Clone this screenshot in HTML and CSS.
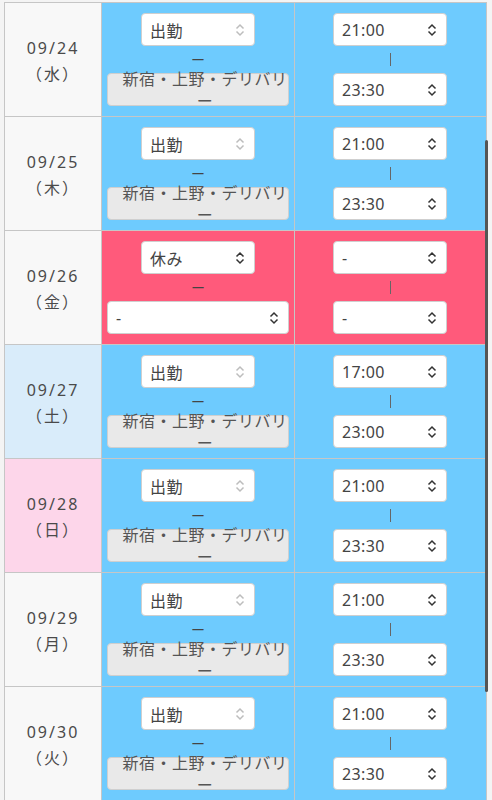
FILE: index.html
```html
<!DOCTYPE html>
<html lang="ja">
<head>
  <meta charset="UTF-8" />
  <meta name="viewport" content="width=device-width, initial-scale=1.0"/>
  <title>シフト提出</title>
  <link rel="stylesheet" href="styles.css">
</head>
<body>
  <div class="shift-table" id="shiftTable"></div>
  <div class="scroll-thumb"></div>

  <script>
    const shifts = [
      { date: "09/24", day: "水", status: "出勤", place: "新宿・上野・デリバリー", start: "21:00", end: "23:30" },
      { date: "09/25", day: "木", status: "出勤", place: "新宿・上野・デリバリー", start: "21:00", end: "23:30" },
      { date: "09/26", day: "金", status: "休み", place: "-", start: "-", end: "-" },
      { date: "09/27", day: "土", status: "出勤", place: "新宿・上野・デリバリー", start: "17:00", end: "23:00" },
      { date: "09/28", day: "日", status: "出勤", place: "新宿・上野・デリバリー", start: "21:00", end: "23:30" },
      { date: "09/29", day: "月", status: "出勤", place: "新宿・上野・デリバリー", start: "21:00", end: "23:30" },
      { date: "09/30", day: "火", status: "出勤", place: "新宿・上野・デリバリー", start: "21:00", end: "23:30" },
    ];

    const chev = '<svg class="chev" viewBox="0 0 10 14" width="10" height="14"><path d="M1.5 5.5 5 2 8.5 5.5M1.5 8.5 5 12 8.5 8.5" fill="none" stroke="currentColor" stroke-width="1.5"/></svg>';

    const table = document.getElementById('shiftTable');
    shifts.forEach(s => {
      const off = s.status === "休み";
      const dayClass = s.day === "土" ? " sat" : s.day === "日" ? " sun" : "";
      const rowClass = off ? " off" : "";
      table.insertAdjacentHTML('beforeend', `
        <div class="cell date${dayClass}">
          <span>${s.date}</span>
          <span>（${s.day}）</span>
        </div>
        <div class="cell work${rowClass}">
          <div class="sel status${off ? '' : ' locked'}"><span>${s.status}</span>${chev}</div>
          <div class="dash"><span>ー</span></div>
          ${off
            ? `<div class="sel place"><span>${s.place}</span>${chev}</div>`
            : `<div class="sel place disabled"><span class="place-text">${s.place}</span></div>`}
        </div>
        <div class="cell time${rowClass}">
          <div class="sel"><span>${s.start}</span>${chev}</div>
          <div class="bar"></div>
          <div class="sel"><span>${s.end}</span>${chev}</div>
        </div>
      `);
    });
  </script>
</body>
</html>
```

FILE: styles.css
```css
body {
  margin: 0;
  background: #f4f4f4;
  font-family: "Noto Sans", "Noto Sans CJK JP", sans-serif;
  color: #444;
}

.shift-table {
  display: grid;
  grid-template-columns: 96px 192px 191px;
  grid-auto-rows: 113px;
  gap: 1px;
  width: 481px;
  padding: 1px;
  margin: 2px 0 0 4px;
  background: #c6c6c6;
}

.cell {
  background: #6ecbfe;
}

.cell.off {
  background: #ff5a7b;
}

.date {
  background: #f8f8f8;
  display: flex;
  flex-direction: column;
  align-items: center;
  justify-content: center;
  font-size: 16px;
  line-height: 26px;
  letter-spacing: 2px;
  color: #4a4a4a;
  padding-top: 2px;
}

.date.sat {
  background: #d9ecfa;
}

.date.sun {
  background: #fdd6ea;
}

.work, .time {
  display: flex;
  flex-direction: column;
  align-items: center;
  padding: 10px 5px;
}

.time {
  padding-left: 38px;
  padding-right: 39px;
}

.sel {
  box-sizing: border-box;
  display: flex;
  align-items: center;
  justify-content: space-between;
  width: 114px;
  height: 33px;
  padding: 0 9px 0 8px;
  background: #fff;
  border: 1px solid #cfcfcf;
  border-radius: 4px;
  font-size: 16px;
  color: #444;
  letter-spacing: 0.4px;
}

.chev {
  color: #333;
  flex: none;
}

.status.locked .chev {
  color: #bdbdbd;
}

.sel.place {
  width: 100%;
}

.sel.place.disabled {
  background: #e9e9e9;
  justify-content: center;
  padding: 0 0 0 14px;
}

.place-text {
  display: block;
  width: 100%;
  text-align: center;
  line-height: 22px;
  letter-spacing: 0.5px;
  color: #555;
}

.dash {
  display: flex;
  align-items: center;
  height: 27px;
  font-size: 14px;
  line-height: 12px;
  color: #444;
}

.bar {
  width: 1px;
  height: 13px;
  margin: 7px 0;
  background: #666;
}

.scroll-thumb {
  position: fixed;
  top: 140px;
  right: 4px;
  width: 3px;
  height: 552px;
  border-radius: 2px;
  background: #555;
}
```
